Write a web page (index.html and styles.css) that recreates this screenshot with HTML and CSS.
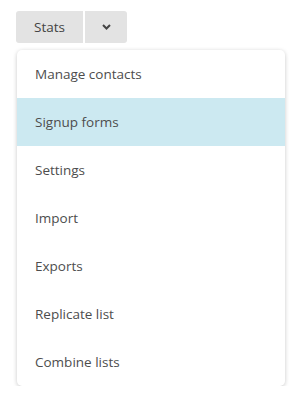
FILE: index.html
```html
<!DOCTYPE html>
<html lang="en">
<head>
<meta charset="UTF-8" />
<meta name="viewport" content="width=device-width, initial-scale=1.0" />
<title>List menu</title>
<link rel="stylesheet" href="styles.css">
</head>
<body>

<div class="btn-group">
  <button class="btn">Stats</button>
  <button class="btn btn-toggle">
    <svg width="9" height="6" viewBox="0 0 9 6"><path d="M1 1l3.5 3.5L8 1" fill="none" stroke="#444" stroke-width="2"/></svg>
  </button>
</div>

<ul class="menu">
  <li>Manage contacts</li>
  <li class="active">Signup forms</li>
  <li>Settings</li>
  <li>Import</li>
  <li>Exports</li>
  <li>Replicate list</li>
  <li>Combine lists</li>
</ul>

</body>
</html>
```

FILE: styles.css
```css
body {
  font-family: "Open Sans", sans-serif;
  margin: 0;
  padding: 11px 0 0 16px;
  background: #fff;
}
.btn-group {
  display: flex;
  gap: 2px;
}
.btn {
  height: 32px;
  border: none;
  background: #e3e3e3;
  color: #444;
  font-family: inherit;
  font-size: 13.5px;
  font-weight: 500;
  border-radius: 3px 0 0 3px;
  width: 67px;
  padding: 0;
}
.btn-toggle {
  width: 42px;
  border-radius: 0 3px 3px 0;
  display: flex;
  align-items: center;
  justify-content: center;
}
.menu {
  list-style: none;
  margin: 7px 0 0 1px;
  padding: 0;
  width: 268px;
  background: #fff;
  border-radius: 5px;
  box-shadow: 0 1px 4px rgba(0, 0, 0, 0.22);
  overflow: hidden;
}
.menu li {
  height: 48px;
  line-height: 48px;
  padding-left: 18px;
  font-size: 13.5px;
  font-weight: 500;
  color: #4d4d4d;
}
.menu li.active {
  background: #cce9f1;
}
```
